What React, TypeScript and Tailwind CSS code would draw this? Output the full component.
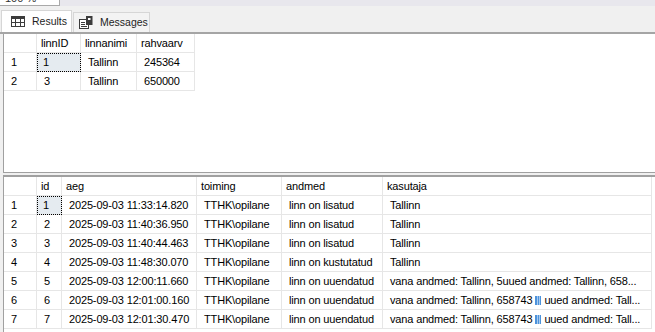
import React from "react";

const F = { fontFamily: '"Liberation Sans", Arial, sans-serif' };

function ResultsIcon() {
  return (
    <svg width="14" height="11" viewBox="0 0 14 11" className="block">
      <rect x="0.5" y="0.5" width="13" height="10" fill="#fff" stroke="#3c3c3c" />
      <rect x="0.5" y="0.5" width="13" height="2.5" fill="#3c3c3c" />
      <line x1="0.5" y1="6.5" x2="13.5" y2="6.5" stroke="#3c3c3c" />
      <line x1="4.5" y1="0.5" x2="4.5" y2="10.5" stroke="#3c3c3c" />
      <line x1="9.5" y1="0.5" x2="9.5" y2="10.5" stroke="#3c3c3c" />
    </svg>
  );
}

function MessagesIcon() {
  return (
    <svg width="14" height="13" viewBox="0 0 14 13" className="block">
      <rect x="0.5" y="3.5" width="9" height="9" fill="#fff" stroke="#3c3c3c" />
      <line x1="2" y1="6.5" x2="6" y2="6.5" stroke="#3c3c3c" />
      <line x1="2" y1="8.5" x2="6" y2="8.5" stroke="#3c3c3c" />
      <line x1="2" y1="10.5" x2="8" y2="10.5" stroke="#3c3c3c" />
      <rect x="7" y="0" width="6.5" height="9" fill="#3c3c3c" />
      <rect x="9" y="2" width="2.5" height="2" fill="#fff" />
    </svg>
  );
}

function Blue() {
  return (
    <span className="inline-flex w-[6px] h-[9px] mx-[3px] align-[-1px] bg-[#4d93db]">
      <span className="w-[2px]" />
      <span className="w-[1px] bg-[#a9cbef]" />
      <span className="w-[1px]" />
      <span className="w-[1px] bg-[#a9cbef]" />
    </span>
  );
}

type Cell = React.ReactNode;

function Grid({
  cols,
  headers,
  rows,
  width,
}: {
  cols: string;
  headers: string[];
  rows: Cell[][];
  width: string;
}) {
  return (
    <div className={`grid ${cols} ${width}`}>
      <div className="h-[19px] border-r border-b border-[#e6e6e6]" />
      {headers.map((h) => (
        <div
          key={h}
          className="h-[19px] border-r border-b border-[#e6e6e6] flex items-center pl-[4px] whitespace-nowrap overflow-hidden"
        >
          {h}
        </div>
      ))}
      {rows.map((r, i) => (
        <React.Fragment key={i}>
          <div className="h-[19px] border-r border-b border-[#e6e6e6] flex items-center pl-[7px]">
            {i + 1}
          </div>
          {r.map((c, j) => (
            <div
              key={j}
              className={`h-[19px] border-r border-b border-[#e6e6e6] flex items-center whitespace-nowrap overflow-hidden ${
                i === 0 && j === 0 ? "bg-[#e5ebf0] outline outline-1 outline-dotted outline-black -outline-offset-1 pl-[6px]" : "pl-[7px]"
              }`}
            >
              {c}
            </div>
          ))}
        </React.Fragment>
      ))}
    </div>
  );
}

export default function App() {
  const rows2: Cell[][] = [
    ["1", "2025-09-03 11:33:14.820", "TTHK\\opilane", "linn on lisatud", "Tallinn"],
    ["2", "2025-09-03 11:40:36.950", "TTHK\\opilane", "linn on lisatud", "Tallinn"],
    ["3", "2025-09-03 11:40:44.463", "TTHK\\opilane", "linn on lisatud", "Tallinn"],
    ["4", "2025-09-03 11:48:30.070", "TTHK\\opilane", "linn on kustutatud", "Tallinn"],
    ["5", "2025-09-03 12:00:11.660", "TTHK\\opilane", "linn on uuendatud", "vana andmed: Tallinn, 5uued andmed: Tallinn, 658..."],
    [
      "6",
      "2025-09-03 12:01:00.160",
      "TTHK\\opilane",
      "linn on uuendatud",
      <span>
        vana andmed: Tallinn, 658743
        <Blue />
        uued andmed: Tall...
      </span>,
    ],
    [
      "7",
      "2025-09-03 12:01:30.470",
      "TTHK\\opilane",
      "linn on uuendatud",
      <span>
        vana andmed: Tallinn, 658743
        <Blue />
        uued andmed: Tall...
      </span>,
    ],
  ];

  return (
    <div className="w-[655px] h-[332px] overflow-hidden bg-[#f0f0f0] text-black" style={F}>
      {/* top strip with zoom box */}
      <div className="h-[6px] flex bg-[#e8e7ed]">
        <div className="w-[60px] h-[6px] overflow-hidden bg-white border-r border-b border-[#a9a9a9]">
          <div className="-mt-[8px] pl-[5px] text-[11px] leading-[13px] text-[#333]">100 %</div>
        </div>
      </div>
      {/* tabs */}
      <div className="h-[26px] flex items-end pl-[1px] text-[10.5px]">
        <div className="w-[71px] h-[22px] bg-white border-t border-l border-r border-[#d6d6d6] flex items-center pl-[9px] gap-[7px]">
          <ResultsIcon />
          <span className="text-[#1e1e1e]">Results</span>
        </div>
        <div className="ml-[1px] w-[77px] h-[20px] bg-[#f3f3f3] border-t border-l border-r border-[#d6d6d6] flex items-center pl-[5px] gap-[7px]">
          <MessagesIcon />
          <span className="text-[#1e1e1e]">Messages</span>
        </div>
      </div>
      <div className="h-[1px] bg-[#a5a5a5]" />
      <div className="h-[1px] bg-[#a5a5a5]" />
      {/* grid 1 */}
      <div className="ml-[3px] h-[139px] bg-white border-l border-b border-[#a0a0a0] text-[11px] tracking-[-0.15px]">
        <Grid
          cols="grid-cols-[33px_44px_56px_58px]"
          width="w-[191px]"
          headers={["linnID", "linnanimi", "rahvaarv"]}
          rows={[
            ["1", "Tallinn", "245364"],
            ["3", "Tallinn", "650000"],
          ]}
        />
      </div>
      <div className="h-[2px]" />
      {/* grid 2 */}
      <div className="ml-[3px] h-[157px] bg-white border-l border-t-2 border-[#a0a0a0] text-[11px] tracking-[-0.15px]">
        <Grid
          cols="grid-cols-[33px_25px_135px_85px_101px_269px]"
          width="w-[648px]"
          headers={["id", "aeg", "toiming", "andmed", "kasutaja"]}
          rows={rows2}
        />
      </div>
    </div>
  );
}
